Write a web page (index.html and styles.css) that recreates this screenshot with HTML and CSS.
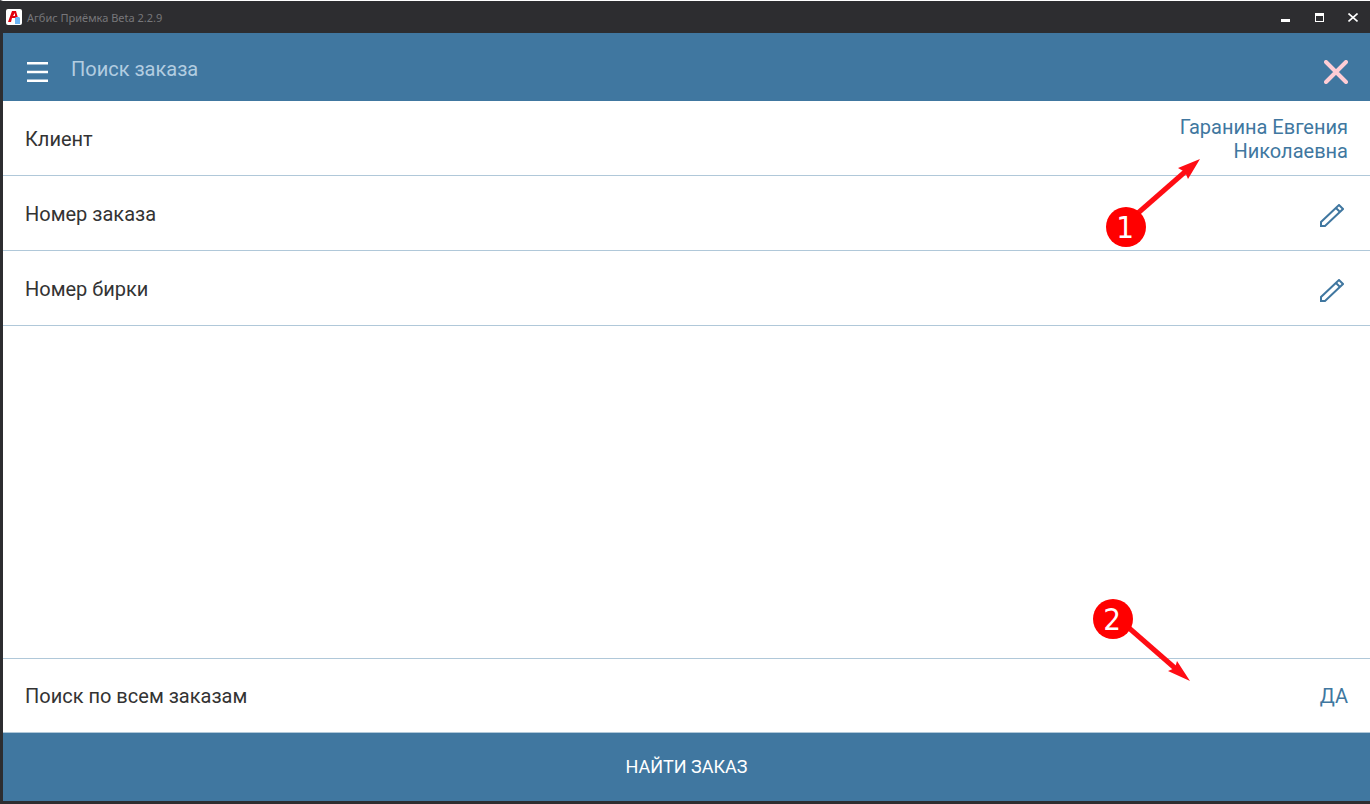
FILE: index.html
```html
<!DOCTYPE html>
<html lang="ru">
<head>
    <meta charset="UTF-8">
    <meta name="viewport" content="width=device-width, initial-scale=1.0">
    <title>Агбис Приёмка</title>
    <link rel="stylesheet" href="styles.css">
</head>
<body>
    <div class="window">
        <div class="titlebar">
            <svg class="logo" width="16" height="16" viewBox="0 0 16 16">
                <rect width="16" height="16" rx="2" fill="#fff"/>
                <path d="M2 13L6 2h4l2 7v3h-3V9H6l-1 4zM7 7h2V4z" fill="#e3000f" fill-rule="evenodd"/>
                <path d="M10 8h3l1 1v6H9V9z" fill="#6db5f5"/>
            </svg>
            <span class="app_name">Агбис Приёмка Beta 2.2.9</span>
            <div class="win_buttons">
                <button type="button" aria-label="Свернуть">
                    <svg width="10" height="10"><path d="M1 6h9v3H1z" fill="#fff"/></svg>
                </button>
                <button type="button" aria-label="Развернуть">
                    <svg width="10" height="10"><path d="M1 0h9v9H1zM2 3v5h7V3z" fill="#fff" fill-rule="evenodd"/></svg>
                </button>
                <button type="button" aria-label="Закрыть">
                    <svg width="10" height="10"><path d="M.500 .500l9 8M9.500 .500l-9 8" stroke="#fff" stroke-width="1.600"/></svg>
                </button>
            </div>
        </div>

        <header class="header">
            <button type="button" class="menu" aria-label="Меню">
                <svg width="22" height="20"><path d="M0 0h21v2.500H0zM0 8.800h21v2.500H0zM0 17.500h21v2.500H0z" fill="#fff"/></svg>
            </button>
            <h1>Поиск заказа</h1>
            <button type="button" class="close" aria-label="Закрыть поиск">
                <svg width="24" height="24"><path d="M2 2l20 20M22 2L2 22" stroke="#ffcdd5" stroke-width="4" stroke-linecap="round"/></svg>
            </button>
        </header>

        <main class="content">
            <div class="row">
                <label for="client">Клиент</label>
                <button type="button" id="client" class="value">Гаранина Евгения Николаевна</button>
                <svg class="callout callout_client" width="94" height="88">
                    <path d="M32 54L80 12" stroke="#ff0d14" stroke-width="5"/>
                    <path d="M94 0L82 20L79 13L72 9z" fill="#ff0d14"/>
                    <circle cx="20" cy="68" r="20" fill="#f00"/>
                    <text x="19" y="79">1</text>
                </svg>
            </div>
            <div class="row">
                <label for="order">Номер заказа</label>
                <button type="button" id="order" class="edit">
                    <svg width="24" height="24" viewBox="0 0 24 24"><path d="M1 22v-4L19 1l4 4L5 22zM16 4l4 4" fill="none" stroke="#4077a0" stroke-width="2"/></svg>
                </button>
            </div>
            <div class="row">
                <label for="tag">Номер бирки</label>
                <button type="button" id="tag" class="edit">
                    <svg width="24" height="24" viewBox="0 0 24 24"><path d="M1 22v-4L19 1l4 4L5 22zM16 4l4 4" fill="none" stroke="#4077a0" stroke-width="2"/></svg>
                </button>
            </div>
            <div class="row row_last">
                <label for="all">Поиск по всем заказам</label>
                <button type="button" id="all" class="value">ДА</button>
                <svg class="callout callout_all" width="97" height="82">
                    <path d="M36 29L83 70" stroke="#ff0d14" stroke-width="5"/>
                    <path d="M97 82L75 72L82 69L84 62z" fill="#ff0d14"/>
                    <circle cx="20" cy="20" r="20" fill="#f00"/>
                    <text x="19" y="31">2</text>
                </svg>
            </div>
        </main>

        <button type="submit" class="submit">НАЙТИ ЗАКАЗ</button>
    </div>
</body>
</html>
```

FILE: styles.css
```css
*{box-sizing:border-box}
body{
    margin:0;
    font-family:Roboto,sans-serif;
    font-size:20px;
    line-height:24px;
    color:#333;
}
button{
    padding:0;
    border:0;
    background:none;
    font:inherit;
    color:inherit;
    cursor:pointer;
}
svg{display:block}

.window{
    display:flex;
    flex-direction:column;
    min-height:100vh;
    border-top:1px solid #fff;
    border-left:3px solid #2d2d30;
    border-bottom:3px solid #2d2d30;
}

/* window title */
.titlebar{
    display:flex;
    align-items:center;
    height:32px;
    margin-left:-3px;
    padding:2px 12px 0 6px;
    background:#2d2d30;
}
.logo{margin-bottom:2px}
.app_name{
    flex:1;
    margin-left:5px;
    font-family:"Noto Sans","Open Sans",sans-serif;
    font-size:11px;
    color:#77777a;
}
.win_buttons{
    display:flex;
    gap:24px;
}

.header{
    display:flex;
    align-items:center;
    height:68px;
    padding:4px 22px 0 24px;
    background:#4077a0;
}
.header h1{
    flex:1;
    margin:0 0 0 22px;
    font-size:20px;
    font-weight:400;
    color:#b3cde0;
}
.menu,.close{padding-top:5px}

.content{
    flex:1;
    display:flex;
    flex-direction:column;
}
.row{
    position:relative;
    display:flex;
    align-items:center;
    justify-content:space-between;
    min-height:75px;
    padding:2px 22px 0;
    border-bottom:1px solid #b0c8d9;
}
.row_last{
    margin-top:auto;
    padding-top:0;
    border-top:1px solid #b0c8d9;
}
.value{
    max-width:180px;
    text-align:right;
    color:#4077a0;
}
.edit{padding:4px 4px 0 0}

/* numbered arrows */
.callout{
    position:absolute;
    z-index:1;
    pointer-events:none;
}
.callout text{
    font-family:"DejaVu Sans Condensed","DejaVu Sans",sans-serif;
    font-size:31px;
    text-anchor:middle;
    fill:#fff;
}
.callout_client{top:58px;right:170px}
.callout_all{top:-60px;right:180px}

.submit{
    height:68px;
    background:#4077a0;
    font-size:18px;
    color:#fff;
}
```
